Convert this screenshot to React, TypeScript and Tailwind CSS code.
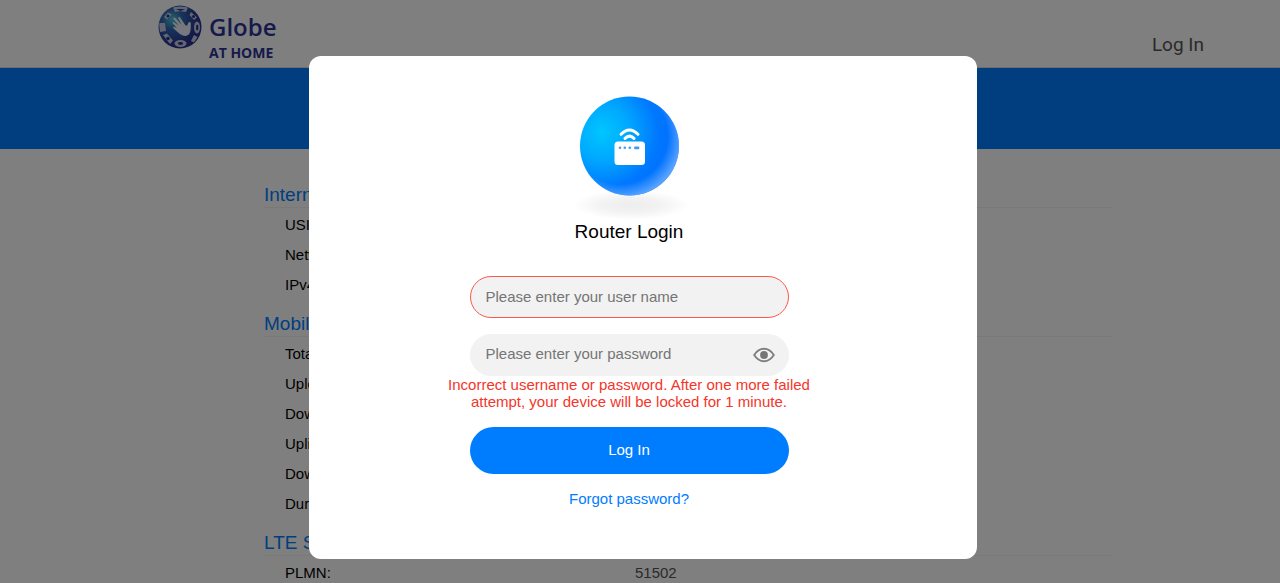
import { useState } from "react";

const sections = [
  {
    title: "Internet",
    rows: [
      { label: "USIM card status:", value: "" },
      { label: "Network status:", value: "" },
      { label: "IPv4 address:", value: "" },
    ],
  },
  {
    title: "Mobile data usage",
    rows: [
      { label: "Total volume:", value: "" },
      { label: "Upload volume:", value: "" },
      { label: "Download volume:", value: "" },
      { label: "Uplink rate:", value: "" },
      { label: "Downlink rate:", value: "" },
      { label: "Duration:", value: "" },
    ],
  },
  {
    title: "LTE Status",
    rows: [{ label: "PLMN:", value: "51502" }],
  },
];

function GlobeLogo() {
  return (
    <svg viewBox="0 0 44 44" className="w-11 h-11 flex-shrink-0" aria-hidden="true">
      <defs>
        <radialGradient id="ball" cx="0.32" cy="0.32" r="0.6">
          <stop offset="0" stopColor="#4cc4d8" />
          <stop offset="0.4" stopColor="#2f68b4" />
          <stop offset="1" stopColor="#2a3290" />
        </radialGradient>
        <clipPath id="ballClip">
          <circle cx="22" cy="22" r="21" />
        </clipPath>
      </defs>
      <circle cx="22" cy="22" r="21.5" fill="url(#ball)" />
      <g clipPath="url(#ballClip)" fill="#c6cce4">
        <path d="M15 2.5 Q22 0.5 30 2.5 L28 7 Q22 5.5 17 7 Z" />
        <path d="M6 12 L10 7.5 L14 9.5 L9 14.5 Z" />
        <path d="M1 18 L7 18 L8 26 L2 27 Z" />
        <path d="M5 30 L9 28.5 L15 35.5 L12 39 Z" />
        <path d="M33 7 L39 12.5 L36 15 L31.5 10 Z" />
        <ellipse cx="39" cy="22.5" rx="3" ry="6" />
        <path d="M33 36 L36 30 L39.5 32 L36 37.5 Z" />
        <ellipse cx="22.5" cy="38.5" rx="6" ry="3.4" />
      </g>
      <g fill="#2a3290">
        <ellipse cx="22.5" cy="38.5" rx="2.6" ry="1.4" />
        <ellipse cx="39.2" cy="22.5" rx="1.2" ry="3" />
        <circle cx="10" cy="33.5" r="1.8" />
        <path d="M18 4 L27 4 L22.5 6 Z" />
        <circle cx="10" cy="11" r="1.5" />
        <circle cx="35.5" cy="11.5" r="1.5" />
      </g>
      {/* open hand */}
      <path
        d="M15 18.6 C14 17.4 15 16.4 16.2 17.2 L20.6 20.6 L15.6 14.2 C14.8 12.9 16.4 11.9 17.5 13.1 L23.4 19.4 L20.3 13.4 C19.8 12 21.4 11.4 22.3 12.7 L27.6 20.6 C29 21.2 29.8 19.4 30.4 17.8 C31.1 16.4 32.8 16.8 32.8 18.6 C32.9 21.6 32.9 26.4 31.2 29.2 L28 31 C24.6 30.8 22.4 29.8 20.4 27.8 L15.6 23.6 C14.6 22.5 15.6 21.4 16.8 22 L18.8 23 Z"
        fill="#eef1fa"
      />
    </svg>
  );
}

function RouterIcon() {
  return (
    <svg viewBox="0 0 120 128" className="w-[120px] h-[128px]" aria-hidden="true">
      <defs>
        <radialGradient id="sphere" cx="0.22" cy="0.36" r="0.8">
          <stop offset="0" stopColor="#00c6ff" />
          <stop offset="0.35" stopColor="#00a8ff" />
          <stop offset="0.7" stopColor="#0078ff" />
          <stop offset="1" stopColor="#006cff" />
        </radialGradient>
        <radialGradient id="rim" cx="0.4" cy="0.4" r="0.62">
          <stop offset="0.78" stopColor="#7ab8ff" stopOpacity="0" />
          <stop offset="1" stopColor="#7ab8ff" stopOpacity="0.7" />
        </radialGradient>
        <radialGradient id="shade">
          <stop offset="0" stopColor="#000" stopOpacity="0.07" />
          <stop offset="0.5" stopColor="#000" stopOpacity="0.05" />
          <stop offset="1" stopColor="#000" stopOpacity="0" />
        </radialGradient>
      </defs>
      <ellipse cx="62" cy="112" rx="58" ry="15" fill="url(#shade)" />
      <circle cx="60.5" cy="53" r="49.5" fill="url(#sphere)" />
      <circle cx="60.5" cy="53" r="49.5" fill="url(#rim)" />
      <rect x="45.5" y="48.5" width="30.5" height="23.5" rx="3.5" fill="#fff" />
      <g fill="none" stroke="#fff" strokeWidth="3" strokeLinecap="round">
        <path d="M52 41.3 Q60.5 32.7 69 41.3" />
        <path d="M56 45.4 Q60.5 41 65 45.4" />
      </g>
      <g fill="#3c9bff">
        <circle cx="51" cy="54.8" r="1.3" />
        <circle cx="55.8" cy="54.8" r="1.3" />
        <circle cx="60.8" cy="54.8" r="1.3" />
        <rect x="65" y="53.4" width="5.4" height="2.9" rx="1.4" />
      </g>
    </svg>
  );
}

function EyeIcon() {
  return (
    <svg viewBox="0 0 22 16" className="w-[22px] h-4" aria-hidden="true">
      <path d="M1.2 8 Q5 1.8 11 1.8 T20.8 8 Q17 14.2 11 14.2 T1.2 8 Z" fill="none" stroke="#808080" strokeWidth="1.9" />
      <circle cx="11" cy="8" r="3.9" fill="#757575" />
    </svg>
  );
}

function LoginDialog() {
  const [showPassword, setShowPassword] = useState(false);

  return (
    <div className="fixed inset-0 z-10 flex items-start justify-center bg-black/50 pt-14 pl-1.5">
      <div role="dialog" aria-labelledby="login-title" className="w-[668px] max-w-full rounded-xl bg-white pt-[37px] pr-7 pb-[51px]">
        <form className="flex flex-col items-center text-[15px]" onSubmit={(e) => e.preventDefault()}>
          <RouterIcon />
          <h2 id="login-title" className="text-[19px] leading-[22px] text-black">
            Router Login
          </h2>
          <div className="mt-[33px] flex w-[319px] max-w-full flex-col gap-4">
            <input
              type="text"
              aria-label="User name"
              placeholder="Please enter your user name"
              className="h-[42px] w-full rounded-full border border-[#fa5a4b] bg-[#f2f2f2] px-[15px] pb-0.5 outline-none placeholder:text-[#757575]"
            />
            <div className="flex h-[42px] items-center rounded-full bg-[#f2f2f2] pl-4 pr-3.5">
              <input
                type={showPassword ? "text" : "password"}
                aria-label="Password"
                placeholder="Please enter your password"
                className="min-w-0 flex-1 bg-transparent pb-0.5 outline-none placeholder:text-[#757575]"
              />
              <button type="button" aria-label="Show password" onClick={() => setShowPassword(!showPassword)}>
                <EyeIcon />
              </button>
            </div>
          </div>
          <p className="w-[380px] max-w-full text-center leading-[17px] text-[#f5352a]">
            Incorrect username or password. After one more failed attempt, your device will be locked for 1 minute.
          </p>
          <button type="submit" className="mt-[17px] h-[47px] w-[319px] max-w-full rounded-full bg-[#007dff] text-white">
            Log In
          </button>
          <a href="#" className="mt-4 leading-[18px] text-[#007dff]">
            Forgot password?
          </a>
        </form>
      </div>
    </div>
  );
}

export default function App() {
  return (
    <div className="h-screen overflow-hidden bg-white font-['Liberation_Sans',Arial,sans-serif]">
      <header className="flex h-[68px] items-start justify-between border-b border-[#ddd] pl-[158px] pr-[76px]">
        <div className="flex gap-[7px] pt-[5px] text-[#2b3399]">
          <GlobeLogo />
          <div className="flex flex-col pt-2">
            <span className="font-['Open_Sans',sans-serif] text-[24px] font-semibold leading-7">Globe</span>
            <span className="font-['Open_Sans',sans-serif] text-[14px] font-bold leading-6">AT HOME</span>
          </div>
        </div>
        <a href="#" className="pt-[33px] font-[Roboto,sans-serif] text-[19px] leading-6 text-[#555]">
          Log In
        </a>
      </header>
      <div className="h-[81px] bg-[#007dff]" />
      <main className="flex flex-col gap-3 pt-[34px] pl-[264px] pr-[168px]">
        {sections.map((section) => (
          <section key={section.title}>
            <h3 className="border-b border-[#f2f2f2] text-[19px] leading-6 text-[#007dff]">{section.title}</h3>
            <dl className="pt-0.5 pl-[21px] text-[15px] leading-[30px]">
              {section.rows.map((row) => (
                <div key={row.label} className="flex">
                  <dt className="w-[350px] flex-shrink-0 text-black">{row.label}</dt>
                  <dd className="text-[#555]">{row.value}</dd>
                </div>
              ))}
            </dl>
          </section>
        ))}
      </main>
      <LoginDialog />
    </div>
  );
}
